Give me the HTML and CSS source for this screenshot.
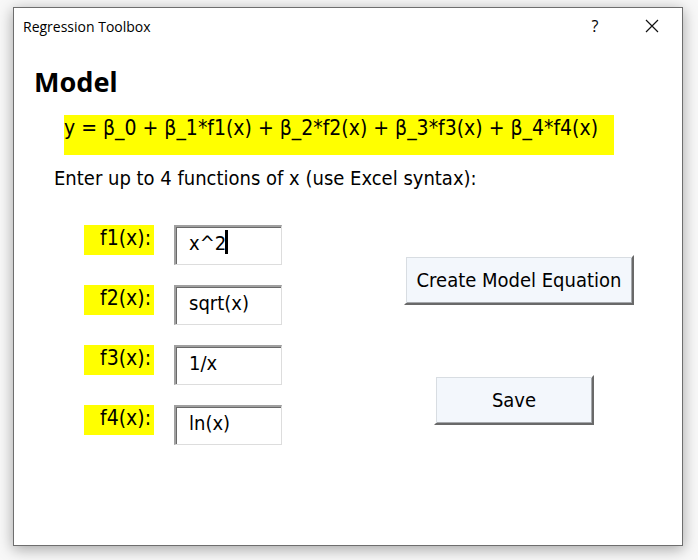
FILE: index.html
```html
<!DOCTYPE html>
<html lang="en">
<head>
<meta charset="utf-8">
<title>Regression Toolbox</title>
<link rel="stylesheet" href="styles.css">
</head>
<body>
<main class="dialog">
  <header class="titlebar">
    <span class="caption">Regression Toolbox</span>
    <button class="tool help" type="button" aria-label="Help">?</button>
    <button class="tool" type="button" aria-label="Close">
      <svg width="14" height="14" viewBox="0 0 14 14" aria-hidden="true"><path d="M1 1L13 13M13 1L1 13" stroke="#111" stroke-width="1.2" fill="none"/></svg>
    </button>
  </header>
  <form class="content">
    <h1 class="heading">Model</h1>
    <p class="equation">y = β_0 + β_1*f1(x) + β_2*f2(x) + β_3*f3(x) + β_4*f4(x)</p>
    <p class="hint">Enter up to 4 functions of x (use Excel syntax):</p>
    <div class="columns">
      <div class="fields">
        <div class="row">
          <label class="name" for="f1">f1(x):</label>
          <div class="box"><input class="field" id="f1" type="text" value="x^2"><span class="caret"></span></div>
        </div>
        <div class="row">
          <label class="name" for="f2">f2(x):</label>
          <div class="box"><input class="field" id="f2" type="text" value="sqrt(x)"></div>
        </div>
        <div class="row">
          <label class="name" for="f3">f3(x):</label>
          <div class="box"><input class="field" id="f3" type="text" value="1/x"></div>
        </div>
        <div class="row">
          <label class="name" for="f4">f4(x):</label>
          <div class="box"><input class="field" id="f4" type="text" value="ln(x)"></div>
        </div>
      </div>
      <div class="actions">
        <button class="action wide" type="button">Create Model Equation</button>
        <button class="action save" type="button">Save</button>
      </div>
    </div>
  </form>
</main>
</body>
</html>
```
FILE: styles.css
```css
* { box-sizing: border-box; }

body {
  margin: 0;
  min-height: 100vh;
  padding: 7px 15px 14px 13px;
  display: flex;
  background: #f8f8f8;
  color: #000;
  font: 20px/24px "DejaVu Sans Condensed", Tahoma, sans-serif;
}

.dialog {
  flex: 1;
  background: #fff;
  border: 1px solid #6e6e6e;
  box-shadow: 0 3px 14px rgba(0, 0, 0, 0.35);
}

.titlebar {
  display: flex;
  align-items: center;
  height: 38px;
  padding: 0 9px;
}

.caption {
  flex: 1;
  font: 14px/20px "Open Sans", "Segoe UI", sans-serif;
}

.tool {
  display: flex;
  align-items: center;
  justify-content: center;
  width: 42px;
  height: 28px;
  padding: 0 0 2px;
  border: 0;
  background: transparent;
  color: #000;
}

.help {
  margin-right: 15px;
  font: 16px/20px "Open Sans", "Segoe UI", sans-serif;
}

.content { padding: 18px 48px 0 50px; }

.heading {
  margin: 0 0 15px -30px;
  font: bold 27px/36px "Noto Sans", Tahoma, sans-serif;
}

.equation {
  margin: 0 20px 11px 0;
  height: 40px;
  padding-top: 1px;
  background: #ff0;
  font-size: 21px;
}

.hint { margin: 0 0 35px -10px; }

.columns {
  display: flex;
  justify-content: space-between;
  padding-left: 20px;
}

.fields {
  display: flex;
  flex-direction: column;
  gap: 20px;
  font-size: 21px;
}

.row {
  display: flex;
  align-items: flex-start;
  gap: 20px;
  height: 40px;
}

.name {
  width: 70px;
  height: 30px;
  padding: 1px 3px 0 0;
  background: #ff0;
  text-align: right;
}

.box { position: relative; }

.field {
  display: block;
  width: 108px;
  height: 40px;
  padding: 0 12px 5px;
  border: 1px solid #ddd;
  border-top: 2px solid #a0a0a0;
  border-left: 2px solid #a0a0a0;
  box-shadow: inset 1px 1px #696969;
  padding-left: 13px;
  background: #fff;
  color: #000;
  font: inherit;
  font-size: 20px;
  outline: 0;
}

.caret {
  position: absolute;
  left: 51px;
  top: 5px;
  width: 3px;
  height: 24px;
  background: #000;
}

.actions {
  display: flex;
  flex-direction: column;
  align-items: flex-start;
  gap: 70px;
  padding-top: 30px;
}

.action {
  width: 160px;
  height: 50px;
  padding: 0;
  border: 2px solid #fff;
  border-right: 2px solid #696969;
  border-bottom: 2px solid #696969;
  background: #f3f7fc;
  box-shadow: inset 1px 1px #d8dde2, inset -1px -1px #a5a8ac;
  color: #000;
  font: inherit;
}

.wide { width: 230px; }

.save { margin-left: 30px; }
```
